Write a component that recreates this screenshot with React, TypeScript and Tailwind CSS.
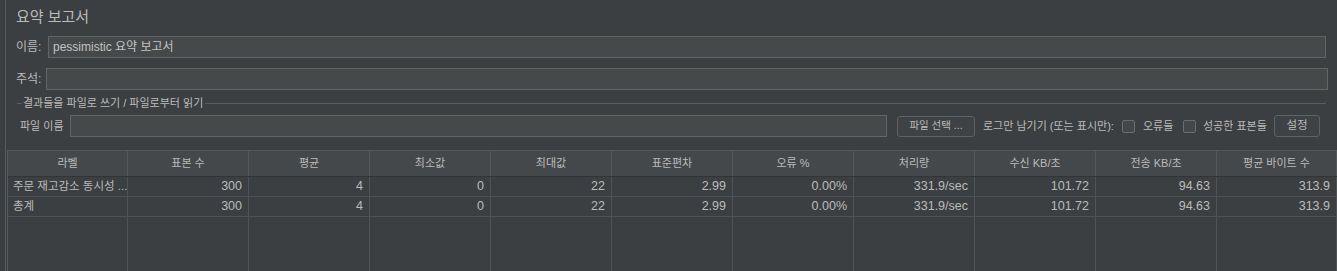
import React from "react";

const font = { fontFamily: '"Liberation Sans", "Noto Sans CJK KR", sans-serif' };

const headers = ["라벨", "표본 수", "평균", "최소값", "최대값", "표준편차", "오류 %", "처리량", "수신 KB/초", "전송 KB/초", "평균 바이트 수"];
const rows = [
  ["주문 재고감소 동시성 ...", "300", "4", "0", "22", "2.99", "0.00%", "331.9/sec", "101.72", "94.63", "313.9"],
  ["총계", "300", "4", "0", "22", "2.99", "0.00%", "331.9/sec", "101.72", "94.63", "313.9"],
];

function Checkbox() {
  return <div className="w-[13px] h-[13px] border border-[#6b6e70] bg-[#43474a] rounded-[2px] shrink-0" />;
}

export default function App() {
  const cols = "grid grid-cols-[120px_121px_121px_121px_121px_121px_121px_121px_121px_121px_120px]";
  return (
    <div className="w-[1337px] h-[271px] bg-[#3c3f41] flex overflow-hidden text-[#bbbbbb]" style={font}>
      <div className="w-[5px] shrink-0 bg-[#3c3f41]" />
      <div className="w-px shrink-0 bg-[#55585a]" />
      <div className="flex-1 flex flex-col min-w-0">
        <div className="pl-[10px] mt-[7px] h-[20px] text-[15px] leading-[20px]">요약 보고서</div>
        <div className="flex items-center mt-[9px] pl-[10px] pr-[11px] h-[22px]">
          <div className="w-[32px] text-[12px] shrink-0">이름:</div>
          <div className="flex-1 h-[22px] bg-[#45494a] border border-[#646464] flex items-center pl-[4px] text-[12px] text-[#c4c4c4] whitespace-nowrap">pessimistic 요약 보고서</div>
        </div>
        <div className="flex items-center mt-[10px] pl-[10px] pr-[9px] h-[22px]">
          <div className="w-[30px] text-[12px] shrink-0">주석:</div>
          <div className="flex-1 h-[22px] bg-[#45494a] border border-[#646464]" />
        </div>
        <div className="flex items-center mt-[6px] pl-[11px] pr-[11px] h-[14px]">
          <div className="w-[5px] h-px bg-[#5a5d5f]" />
          <div className="px-[1px] text-[11px] leading-[14px] whitespace-nowrap">결과들을 파일로 쓰기 / 파일로부터 읽기</div>
          <div className="flex-1 h-px bg-[#5a5d5f] ml-[1px]" />
        </div>
        <div className="flex items-center mt-[5px] pl-[14px] h-[22px] text-[11px] whitespace-nowrap">
          <div className="w-[50px] shrink-0">파일 이름</div>
          <div className="w-[817px] h-[22px] bg-[#45494a] border border-[#646464] shrink-0" />
          <div className="ml-[10px] w-[78px] h-[21px] border border-[#5f6264] rounded-[3px] bg-[#3f4244] flex items-center justify-center text-[10.5px] shrink-0">파일 선택 ...</div>
          <div className="ml-[8px] w-[139px] shrink-0">로그만 남기기 (또는 표시만):</div>
          <Checkbox />
          <div className="ml-[8px] w-[40px] shrink-0">오류들</div>
          <Checkbox />
          <div className="ml-[7px] w-[71px] shrink-0">성공한 표본들</div>
          <div className="w-[46px] h-[22px] border border-[#5f6264] rounded-[3px] bg-[#3f4244] flex items-center justify-center text-[11.5px] shrink-0">설정</div>
        </div>
        <div className="mt-[13px] ml-[1px] flex-1 flex flex-col border-t border-l border-[#55585a] min-h-0">
          <div className={`${cols} h-[26px] bg-[#45484a] border-b border-[#323435]`}>
            {headers.map((h, i) => (
              <div key={i} className="border-r border-[#55585a] flex items-center justify-center text-[11px] whitespace-nowrap">{h}</div>
            ))}
          </div>
          {rows.map((r, ri) => (
            <div key={ri} className={`${cols} h-[20px] border-b border-[#505355]`}>
              {r.map((c, i) => (
                <div key={i} className={`border-r border-[#505355] flex items-center whitespace-nowrap overflow-hidden ${i === 0 ? "pl-[5px] text-[11.5px]" : "justify-end pr-[6px] text-[12.5px]"}`}>{c}</div>
              ))}
            </div>
          ))}
          <div className={`${cols} flex-1`}>
            {headers.map((_, i) => (
              <div key={i} className="border-r border-[#505355]" />
            ))}
          </div>
        </div>
      </div>
    </div>
  );
}
